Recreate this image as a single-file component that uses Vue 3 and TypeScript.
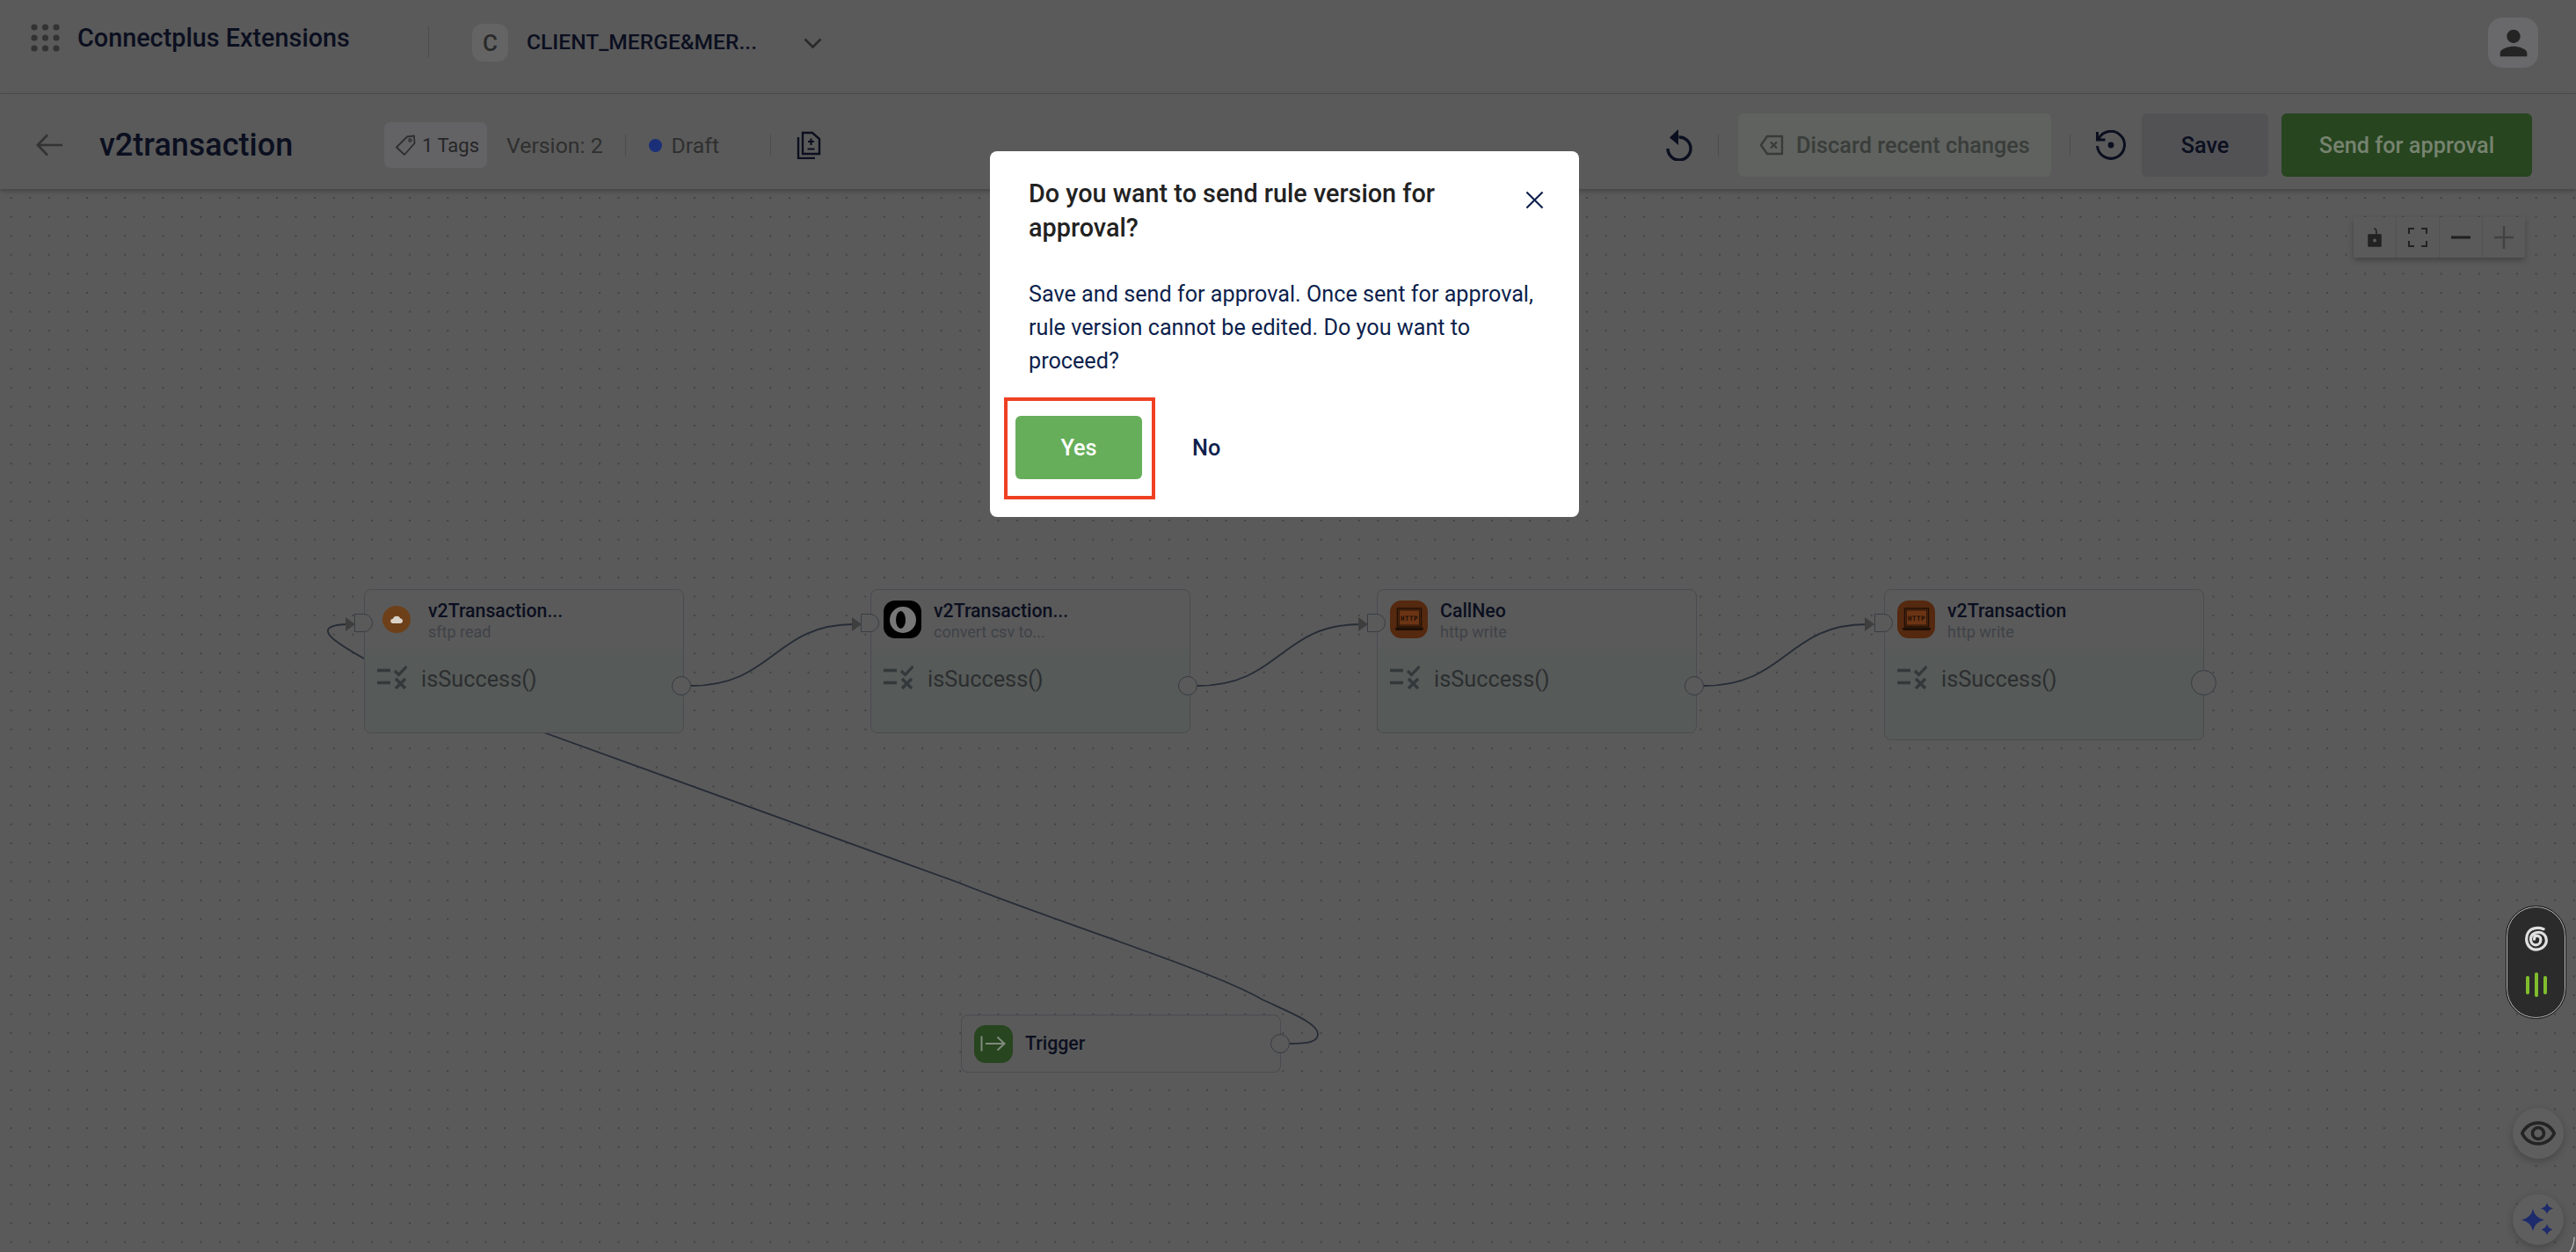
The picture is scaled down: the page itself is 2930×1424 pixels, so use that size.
<script setup lang="ts">
interface FlowNode {
  id: number
  title: string
  sub: string
  left: number
  height: number
  icon: 'sftp' | 'convert' | 'http'
}

const nodes: FlowNode[] = [
  { id: 1, title: 'v2Transaction...', sub: 'sftp read', left: 414, height: 164, icon: 'sftp' },
  { id: 2, title: 'v2Transaction...', sub: 'convert csv to...', left: 990, height: 164, icon: 'convert' },
  { id: 3, title: 'CallNeo', sub: 'http write', left: 1566, height: 164, icon: 'http' },
  { id: 4, title: 'v2Transaction', sub: 'http write', left: 2143, height: 172, icon: 'http' },
]

const edges = [
  'M786 780C880 780 880 710 972 710',
  'M1362 780C1456 780 1456 710 1548 710',
  'M1938 780C2032 780 2032 710 2124 710',
  'M1467 1187C1488 1187 1499 1185 1499 1176C1499 1164 1468 1152 1436 1137C1380 1104 1200 1048 1088 1003L621 834L414 749C380 730 352 712 394 710',
]
const arrows = [393, 969, 1545, 2121]

const gridDots = [0, 1, 2].flatMap((r) => [0, 1, 2].map((c) => ({ cx: 4 + c * 12.5, cy: 4 + r * 12, key: `${r}-${c}` })))
</script>

<template>
  <div class="app">
    <header class="topbar">
      <svg class="grid-icon" width="33" height="32" viewBox="0 0 33 32">
        <circle v-for="d in gridDots" :key="d.key" :cx="d.cx" :cy="d.cy" r="3.6" fill="#333" />
      </svg>
      <span class="brand">Connectplus Extensions</span>
      <span class="top-divider"></span>
      <span class="client-badge">C</span>
      <span class="client-name">CLIENT_MERGE&amp;MER...</span>
      <svg class="chevron" width="21" height="12" viewBox="0 0 21 12">
        <path d="M1.5 1.5 10.5 10.5 19.5 1.5" fill="none" stroke="#2a2a2a" stroke-width="2.8" />
      </svg>
      <span class="user-btn">
        <svg width="46" height="46" viewBox="0 0 24 24">
          <path fill="#242424" d="M12 12c2.21 0 4-1.79 4-4s-1.79-4-4-4-4 1.79-4 4 1.79 4 4 4zm0 2c-2.67 0-8 1.34-8 4v2h16v-2c0-2.66-5.33-4-8-4z" />
        </svg>
      </span>
    </header>

    <section class="subbar">
      <svg class="back" width="30" height="26" viewBox="0 0 30 26">
        <path d="M13 1.5 1.8 13 13 24.5M2 13H30" fill="none" stroke="#333" stroke-width="2.6" />
      </svg>
      <h1 class="rule-name">v2transaction</h1>
      <span class="tag-chip">
        <svg width="26" height="26" viewBox="0 0 26 26">
          <path d="M15 3.5 23 2.5 23.5 11 12 24 3 15.5Z" fill="none" stroke="#2e2e2e" stroke-width="1.8" stroke-linejoin="round" />
          <circle cx="18.5" cy="7.5" r="1.5" fill="none" stroke="#2e2e2e" stroke-width="1.4" />
        </svg>
        1 Tags
      </span>
      <span class="meta version">Version: 2</span>
      <span class="bar-divider d1"></span>
      <span class="status-dot"></span>
      <span class="meta draft">Draft</span>
      <span class="bar-divider d2"></span>
      <svg class="doc-icon" width="28" height="32" viewBox="0 0 28 32">
        <path d="M7 2H18L26 9V26H7ZM2 7V31H21" fill="none" stroke="#0b0f1f" stroke-width="2.4" />
        <path d="M16.5 8.5V16M13 12H20M12.5 20.5H20.5" fill="none" stroke="#0b0f1f" stroke-width="2.2" />
      </svg>

      <div class="bar-right">
        <svg class="undo" width="31" height="36" viewBox="0 0 31 36">
          <path d="M15.5 11A13 13 0 1 1 3 24" fill="none" stroke="#0b0f1f" stroke-width="3.4" transform="translate(0 -2)" />
          <path d="M15 0 5 9.5 15 18Z" fill="#0b0f1f" />
        </svg>
        <span class="bar-divider d3"></span>
        <span class="btn discard">
          <svg width="28" height="24" viewBox="0 0 28 24">
            <path d="M9 2H26V22H9L2 12Z" fill="none" stroke="#383b38" stroke-width="2.4" stroke-linejoin="round" />
            <path d="M13 8.5 20 15.5M20 8.5 13 15.5" fill="none" stroke="#383b38" stroke-width="2.2" />
          </svg>
          Discard recent changes
        </span>
        <span class="bar-divider d4"></span>
        <svg class="restore" width="35" height="34" viewBox="0 0 35 34">
          <path d="M4 10A15.5 15.5 0 1 1 2.5 18" fill="none" stroke="#0b0f1f" stroke-width="3" />
          <path d="M2.5 2V11H11.5" fill="none" stroke="#0b0f1f" stroke-width="3" />
          <circle cx="18" cy="17" r="3.4" fill="#0b0f1f" />
        </svg>
        <span class="btn save">Save</span>
        <span class="btn send">Send for approval</span>
      </div>
    </section>

    <main class="canvas">
      <svg class="edges" width="2930" height="1424" viewBox="0 215 2930 1424">
        <path v-for="e in edges" :key="e" :d="e" fill="none" stroke="#262c36" stroke-width="1.8" />
        <path v-for="x in arrows" :key="x" :d="`M${x} 702 L${x + 11} 710 L${x} 718Z`" fill="#3e3e3e" />
      </svg>

      <article v-for="n in nodes" :key="n.id" class="node" :style="{ left: n.left + 'px', height: n.height + 'px' }">
        <span class="port-in"></span>
        <div class="node-head">
          <span v-if="n.icon === 'sftp'" class="icon-sftp">
            <svg width="15" height="9" viewBox="0 0 18 12" preserveAspectRatio="none">
              <path fill="#d9d2c8" d="M4 12a3.5 3.5 0 0 1-.6-7A5.5 5.5 0 0 1 13.6 4.2 4 4 0 0 1 14 12Z" />
            </svg>
          </span>
          <span v-else-if="n.icon === 'convert'" class="icon-convert"><i></i></span>
          <span v-else class="icon-http">
            <svg width="34" height="30" viewBox="0 0 34 30">
              <rect x="3.5" y="2" width="27" height="21" fill="none" stroke="#1d0f06" stroke-width="1.4" />
              <rect x="5.5" y="4" width="23" height="17" fill="#6b3414" stroke="#1d0f06" stroke-width=".7" />
              <text x="17" y="15.5" text-anchor="middle" class="http-text">HTTP</text>
              <path d="M.5 24H33.5L32 27H2Z" fill="#1d0f06" />
            </svg>
          </span>
          <div class="node-text" :class="{ narrow: n.icon === 'sftp' }">
            <div class="node-title">{{ n.title }}</div>
            <div class="node-sub">{{ n.sub }}</div>
          </div>
        </div>
        <div class="node-body">
          <svg width="34" height="27" viewBox="0 0 34 27">
            <path d="M0 5.5H15M0 19.5H15" stroke="#33383a" stroke-width="3.4" />
            <path d="M20 6 24.5 10.5 33.5 1" fill="none" stroke="#33383a" stroke-width="3.2" />
            <path d="M21 15 32 26M32 15 21 26" stroke="#33383a" stroke-width="3.4" />
          </svg>
          <span class="cond">isSuccess()</span>
        </div>
        <span class="port-out" :class="{ big: n.id === 4 }"></span>
      </article>

      <article class="node trigger">
        <span class="icon-trigger">
          <svg width="30" height="20" viewBox="0 0 30 20">
            <path d="M1.5 1.5V18.5M6 10H27M19.5 2.5 27.5 10 19.5 17.5" fill="none" stroke="#808a7d" stroke-width="2" />
          </svg>
        </span>
        <span class="node-title">Trigger</span>
        <span class="port-out trig"></span>
      </article>

      <div class="controls">
        <span class="ctl">
          <svg width="18" height="22" viewBox="0 0 18 22">
            <path d="M11 8C11 3 11 1 8 1" fill="none" stroke="#222" stroke-width="1.6" />
            <path d="M2 8H16V21H2Z" fill="#222" stroke="#222" stroke-linejoin="round" stroke-width="1.5" />
            <circle cx="9" cy="14.5" r="2" fill="#5a5a5a" />
          </svg>
        </span>
        <span class="ctl">
          <svg width="22" height="22" viewBox="0 0 22 22">
            <path d="M1 7V1H7M15 1H21V7M21 15V21H15M7 21H1V15" fill="none" stroke="#222" stroke-width="2" />
          </svg>
        </span>
        <span class="ctl"><svg width="22" height="4" viewBox="0 0 22 4"><path d="M0 2H22" stroke="#222" stroke-width="3.2" /></svg></span>
        <span class="ctl"><svg width="22" height="26" viewBox="0 0 22 26"><path d="M0 13H22M11 0V26" stroke="#424242" stroke-width="2.4" /></svg></span>
      </div>

      <div class="voice-pill">
        <svg width="30" height="30" viewBox="0 0 34 37">
          <path d="M27 4.5C23 3 18 2.5 14 3.5C7 5 3 11 3 18.5C3 27 9 33.5 16 33.5C24 33.5 31 28 31 20C31 14 26 9 20 9C13.5 9 9 13 9 18.7C9 23.5 12 27 16 27C20 27 23 23.5 23 19C23 16 20.5 14 17 14C15 14 14 16 14 18.7" fill="none" stroke="#e0e0e0" stroke-width="4" stroke-linecap="round" />
        </svg>
        <div class="bars"><i class="b1"></i><i class="b2"></i><i class="b3"></i></div>
      </div>

      <span class="fab eye">
        <svg width="44" height="44" viewBox="0 0 24 24">
          <path fill="#242424" d="M12 6.5c3.79 0 7.17 2.13 8.82 5.5-1.65 3.37-5.02 5.5-8.82 5.5S4.83 15.37 3.18 12C4.83 8.63 8.21 6.5 12 6.5m0-2C7 4.5 2.73 7.61 1 12c1.73 4.39 6 7.5 11 7.5s9.27-3.11 11-7.5c-1.73-4.39-6-7.5-11-7.5zm0 5c1.38 0 2.5 1.12 2.5 2.5s-1.12 2.5-2.5 2.5-2.5-1.12-2.5-2.5 1.12-2.5 2.5-2.5m0-2c-2.48 0-4.5 2.02-4.5 4.5s2.02 4.5 4.5 4.5 4.5-2.02 4.5-4.5-2.02-4.5-4.5-4.5z" />
        </svg>
      </span>
      <span class="fab spark">
        <svg width="38" height="38" viewBox="0 0 38 38">
          <path fill="#1d2a6b" d="M13 7Q15 17 26 19.5Q15 22 13 32Q11 22 0 19.5Q11 17 13 7Z" />
          <path fill="#1d2a6b" d="M29 0Q30 5 36 6.5Q30 8 29 13Q28 8 22 6.5Q28 5 29 0Z" />
          <path fill="#1d2a6b" d="M29 24Q30 29 35.5 30.5Q30 32 29 37Q28 32 22.5 30.5Q28 29 29 24Z" />
        </svg>
      </span>

      <svg class="corner" width="8" height="17" viewBox="0 0 8 17">
        <path d="M6 0C6 6 5 11 1 17" fill="none" stroke="#bdbdbd" stroke-width="1.2" />
      </svg>
    </main>

    <div class="backdrop">
      <div class="modal" role="dialog">
        <div class="modal-head">
          <h2 class="modal-title">Do you want to send rule version for approval?</h2>
          <svg class="close" width="21" height="21" viewBox="0 0 22 22">
            <path d="M1.5 1.5 20.5 20.5M20.5 1.5 1.5 20.5" stroke="#0d1f4c" stroke-width="2.2" />
          </svg>
        </div>
        <p class="modal-text">Save and send for approval. Once sent for approval, rule version cannot be edited. Do you want to proceed?</p>
        <div class="modal-actions">
          <span class="yes-frame"><button class="yes">Yes</button></span>
          <button class="no">No</button>
        </div>
      </div>
    </div>
  </div>
</template>

<style>
html, body { margin: 0; background: #5a5a5a; }
</style>

<style scoped>
.app { position: relative; width: 2930px; height: 1424px; overflow: hidden; display: flex; flex-direction: column; font-family: Roboto, "Liberation Sans", sans-serif; background: #5a5a5a; color: #0b0f1f; }

.topbar { height: 106px; flex: none; display: flex; align-items: flex-start; border-bottom: 1px solid #4f4f4f; box-sizing: content-box; }
.grid-icon { margin: 27px 0 0 35px; }
.brand { margin: 24px 0 0 20px; font-size: 28.8px; line-height: 38px; font-weight: 500; width: 399px; white-space: nowrap; }
.top-divider { width: 1px; height: 36px; margin-top: 30px; background: #4d4d4d; }
.client-badge { width: 41px; height: 43px; margin: 27px 0 0 49px; border-radius: 12px; background: #646464; color: #2a2a2a; font-size: 26px; font-weight: 500; display: flex; align-items: center; justify-content: center; }
.client-name { margin: 31px 0 0 21px; font-size: 24.6px; line-height: 34px; font-weight: 500; width: 315px; white-space: nowrap; }
.chevron { margin-top: 43px; }
.user-btn { margin: 20px 43px 0 auto; width: 57px; height: 57px; border-radius: 16px; background: #69696b; display: flex; align-items: center; justify-content: center; }

.subbar { position: relative; z-index: 2; height: 108px; padding-top: 8px; box-sizing: border-box; flex: none; display: flex; align-items: center; background: #5a5a5a; box-shadow: 0 2px 5px rgba(0, 0, 0, .28); }
.back { margin-left: 41px; }
.rule-name { margin: 0 0 0 42px; font-size: 36px; font-weight: 500; line-height: 48px; width: 324px; white-space: nowrap; }
.tag-chip { width: 117px; height: 52px; box-sizing: border-box; padding-left: 11px; border-radius: 7px; background: #636366; display: flex; align-items: center; gap: 6px; font-size: 22px; color: #262626; white-space: nowrap; }
.meta { font-size: 24.8px; color: #2f2f2f; white-space: nowrap; }
.version { margin-left: 22px; }
.bar-divider { width: 1px; height: 24px; background: #4b4b4b; flex: none; }
.d1 { margin-left: 25px; }
.status-dot { width: 15px; height: 15px; margin-left: 26px; border-radius: 50%; background: #1b2f78; }
.draft { margin-left: 11px; }
.d2 { margin-left: 58px; }
.doc-icon { margin-left: 29px; }

.bar-right { margin-left: auto; padding-right: 50px; display: flex; align-items: center; }
.d3 { margin: 0 22px 0 29px; }
.btn { height: 72px; box-sizing: border-box; border-radius: 6px; display: flex; align-items: center; justify-content: center; font-size: 25.3px; font-weight: 500; white-space: nowrap; }
.discard { width: 356px; gap: 14px; background: #5f625f; color: #3a3d3a; }
.d4 { margin: 0 28px 0 21px; }
.save { width: 144px; margin-left: 18px; background: #525255; }
.send { width: 285px; margin-left: 15px; background: #27451f; color: #76836f; }

.canvas { position: relative; flex: 1; background-color: #5a5a5a; background-image: radial-gradient(circle, #424242 1px, transparent 1.3px); background-size: 21.6px 21.6px; background-position: 1.8px -0.8px; }
.edges { position: absolute; left: 0; top: 0; }
.corner { position: absolute; right: 0; bottom: 0; }

.node { position: absolute; top: 455px; width: 364px; box-sizing: border-box; border: 1.5px solid #4a4a52; border-radius: 8px; background: #5a5a5a; display: flex; flex-direction: column; }
.node-head { height: 67px; flex: none; display: flex; align-items: center; padding-left: 14px; }
.node-body { flex: 1; display: flex; align-items: flex-start; gap: 16px; padding: 19px 0 0 14px; background: #565a58; border-radius: 0 0 7px 7px; }
.node-text { margin-left: 14px; }
.node-text.narrow { margin-left: 20px; }
.node-title { font-size: 21.3px; font-weight: 500; line-height: 28px; white-space: nowrap; }
.node-sub { font-size: 18px; line-height: 20px; color: #3f4247; white-space: nowrap; }
.cond { font-size: 25.3px; line-height: 32px; color: #2c2e30; }

.icon-sftp { width: 32px; height: 31px; margin: 0 0 0 6px; border-radius: 50%; background: #6d4019; display: flex; align-items: center; justify-content: center; }
.icon-convert { width: 43px; height: 43px; border-radius: 13px; background: #000; display: flex; align-items: center; justify-content: center; }
.icon-convert i { width: 30px; height: 30px; border-radius: 50%; background: #777; display: flex; position: relative; }
.icon-convert i::after { content: ""; position: absolute; left: 7px; top: 5px; width: 11px; height: 20px; border-radius: 50%; background: #000; }
.icon-http { width: 43px; height: 43px; border-radius: 13px; background: #54290f; display: flex; align-items: center; justify-content: center; }
.http-text { font: 600 7.5px "DejaVu Sans Mono", monospace; fill: #1d0f06; letter-spacing: .5px; }

.port-in { position: absolute; left: -12px; top: 27px; width: 21px; height: 21px; box-sizing: border-box; border: 1.5px solid #383c42; border-radius: 0 11px 11px 0; background: #5a5a5a; }
.port-out { position: absolute; right: -9px; top: 98px; width: 22px; height: 22px; box-sizing: border-box; border: 1.5px solid #383c42; border-radius: 50%; background: #5a5a5a; }
.port-out.big { width: 29px; height: 29px; right: -15px; top: 91px; }
.node.trigger { left: 1093px; top: 939px; width: 364px; height: 66px; flex-direction: row; align-items: center; padding-left: 14px; gap: 14px; }
.icon-trigger { width: 44px; height: 43px; border-radius: 13px; background: #27451f; display: flex; align-items: center; justify-content: center; }
.port-out.trig { top: 21px; right: -11px; }

.controls { position: absolute; left: 2677px; top: 32px; width: 195px; height: 46px; display: flex; background: #5a5a5a; box-shadow: 0 3px 6px rgba(0, 0, 0, .25); }
.ctl { flex: 1; display: flex; align-items: center; justify-content: center; border-right: 1px solid #525252; }
.ctl:last-child { border-right: 0; }

.voice-pill { position: absolute; left: 2851px; top: 816px; width: 67px; height: 127px; box-sizing: border-box; border-radius: 34px; background: #2b2b2b; border: 1.5px solid #c0c0c0; outline: 1.5px solid #141414; display: flex; flex-direction: column; align-items: center; padding-top: 21px; gap: 23px; }
.bars { display: flex; gap: 6px; align-items: center; }
.bars i { width: 4px; border-radius: 2px; background: #80bd2d; }
.b1, .b3 { height: 21px; }
.b2 { height: 28px; }

.fab { position: absolute; left: 2858px; width: 58px; height: 58px; border-radius: 50%; background: #5e5e5e; box-shadow: 0 3px 8px rgba(0, 0, 0, .22); display: flex; align-items: center; justify-content: center; }
.eye { top: 1045px; }
.spark { top: 1143px; }

.backdrop { position: absolute; inset: 0; z-index: 5; display: flex; justify-content: center; align-items: flex-start; padding: 172px 8px 0 0; box-sizing: border-box; }
.modal { width: 670px; height: 416px; box-sizing: border-box; background: #fff; border-radius: 8px; padding: 29px 44px 0; position: relative; }
.modal-head { display: flex; align-items: flex-start; justify-content: space-between; }
.modal-title { margin: 0; width: 470px; font-size: 28.8px; line-height: 39px; font-weight: 500; color: #222; }
.close { margin: 16px 0 0 0; position: relative; left: 4px; }
.modal-text { margin: 37px 0 0; font-size: 25.2px; line-height: 38px; color: #0d1f4c; }
.modal-actions { position: absolute; left: 16px; top: 280px; display: flex; align-items: center; }
.yes-frame { width: 172px; height: 116px; box-sizing: border-box; border: 4px solid #ef4023; padding: 17px 0 0 9px; display: block; }
.yes { width: 144px; height: 72px; border: 0; border-radius: 6px; background: #66ae5a; color: #fff; font: 500 25.3px Roboto, sans-serif; display: block; }
.no { margin: -2px 0 0 42px; padding: 0; border: 0; background: none; color: #0d1f4c; font: 500 25.3px Roboto, sans-serif; }
</style>
